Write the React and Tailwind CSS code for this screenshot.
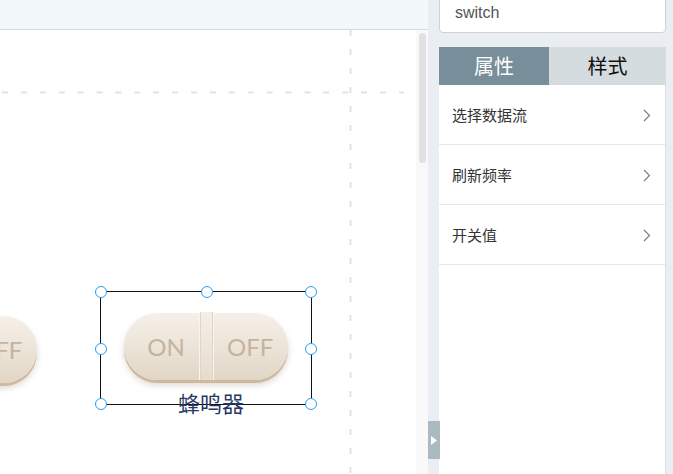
const handles = [
  'left-[-6px] top-[-6px]',
  'left-[100px] top-[-6px]',
  'right-[-6px] top-[-6px]',
  'left-[-6px] top-[51px]',
  'right-[-6px] top-[51px]',
  'left-[-6px] bottom-[-6px]',
  'right-[-6px] bottom-[-6px]',
]

function Pill({ className }) {
  return (
    <div
      className={
        'absolute h-[67px] w-[164px] rounded-full bg-gradient-to-b from-[#f5f0e9] via-[#ece4d8] to-[#e1d6c5] shadow-[0_3px_0_#cdb99f,0_5px_6px_rgba(120,100,70,0.25)] ' +
        className
      }
      style={{ fontFamily: 'Lato, "Open Sans", sans-serif' }}
    >
      <div className="flex h-full items-center text-[24px] text-[#c6b39f]">
        <div className="flex w-[75px] justify-center pl-[9px]">ON</div>
        <div className="h-[68px] w-[15px] -mt-[1px] border-x border-[#f8f4ee] bg-gradient-to-b from-[#f4efe8] to-[#e6dccd] shadow-[inset_1px_0_0_#e0d6c7,inset_-1px_0_0_#e0d6c7]" />
        <div className="flex flex-1 justify-start pl-[13px]">OFF</div>
      </div>
    </div>
  )
}

function Row({ label }) {
  return (
    <div className="flex h-[60px] items-center justify-between border-b border-[#e6e8ef] pl-[13px] pr-[14px] pt-[2px] text-[15px] text-[#333]">
      <span>{label}</span>
      <svg width="8" height="13" viewBox="0 0 8 13" fill="none">
        <polyline points="1,1 6.5,6.5 1,12" stroke="#7a7a7a" strokeWidth="1.1" />
      </svg>
    </div>
  )
}

export default function App() {
  return (
    <div
      className="flex h-[474px] w-[673px] overflow-hidden bg-[#eaeef3]"
      style={{ fontFamily: '"Noto Sans CJK SC", "Liberation Sans", sans-serif' }}
    >
      <div className="flex w-[428px] flex-col">
        <div className="h-[30px] border-b border-[#d3dcdf] bg-[#f3f8f8]" />
        <div className="flex flex-1">
          <div className="relative flex-1 overflow-hidden bg-white">
            <svg className="absolute left-0 top-[61px]" width="416" height="3">
              <line x1="2" y1="1.5" x2="404" y2="1.5" stroke="#e3e3e3" strokeWidth="2" strokeDasharray="6 12.9" />
            </svg>
            <svg className="absolute left-[349px] top-0" width="3" height="444">
              <line x1="1.5" y1="0" x2="1.5" y2="444" stroke="#e3e3e3" strokeWidth="2" strokeDasharray="6 13" />
            </svg>

            <Pill className="left-[-127px] top-[286px]" />

            <div className="absolute left-[100px] top-[261px] h-[114px] w-[212px] border-[1.5px] border-[#111]">
              <Pill className="left-[23px] top-[21px]" />
              <div className="absolute left-0 right-0 top-[96px] pl-[10px] text-center text-[22px] leading-[28px] text-[#283866]">
                蜂鸣器
              </div>
              {handles.map((h, i) => (
                <div
                  key={i}
                  className={'absolute h-[12px] w-[12px] rounded-full border-[1.5px] border-[#2a9df4] bg-white ' + h}
                />
              ))}
            </div>
          </div>
          <div className="w-[12px] bg-[#f9f9f9] pt-[3px]">
            <div className="ml-[3px] h-[130px] w-[7px] rounded-full bg-[#e1e1e1]" />
          </div>
        </div>
      </div>

      <div className="flex w-[11px] flex-col justify-end pb-[15px]">
        <div className="relative z-10 flex h-[38px] w-[12px] items-center justify-center bg-[#abb9c0]">
          <svg width="6" height="9" viewBox="0 0 6 9">
            <polygon points="0,0 6,4.5 0,9" fill="#fff" />
          </svg>
        </div>
      </div>

      <div className="flex w-[227px] flex-col">
        <div
          className="-mt-[8px] flex h-[41px] shrink-0 items-center rounded-[4px] border border-[#cfd3d8] bg-white px-[15px] text-[16px] text-[#555]"
          style={{ fontFamily: '"Liberation Sans", sans-serif' }}
        >
          switch
        </div>
        <div className="mt-[14px] flex h-[38px] shrink-0 text-[20px]">
          <div className="flex w-[110px] items-center justify-center bg-[#788e9a] text-white">属性</div>
          <div className="flex flex-1 items-center justify-center bg-[#d5dcdf] text-[#111]">样式</div>
        </div>
        <div className="flex-1 border-r border-[#dde2e8] bg-white">
          <Row label="选择数据流" />
          <Row label="刷新频率" />
          <Row label="开关值" />
        </div>
      </div>
    </div>
  )
}
